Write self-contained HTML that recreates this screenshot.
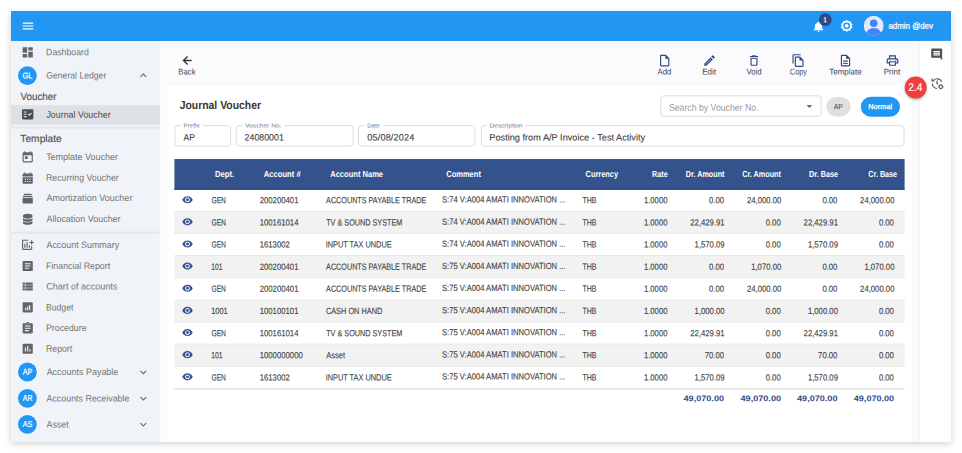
<!DOCTYPE html>
<html lang="en">
<head>
<meta charset="utf-8">
<title>Journal Voucher</title>
<style>
*{box-sizing:border-box;margin:0;padding:0}
html,body{width:962px;height:453px;overflow:hidden;background:#fff}
body{font-family:"Liberation Sans",sans-serif;color:#444;position:relative}
#shadow{position:absolute;left:11px;top:11px;width:940px;height:431px;background:#fbfbfe;box-shadow:0 1.5px 7px rgba(0,0,0,.2)}
#L{position:absolute;left:0;top:0;width:962px;height:453px;clip-path:inset(11px 11px 11px 11px)}
#L>div,#L>svg{position:absolute}
svg{display:block}
.t{white-space:pre;text-rendering:geometricPrecision}
.ic{fill:#646464}
.tbi{fill:#2f4a86}
.eye{fill:#34528c}
</style>
</head>
<body>
<div id="shadow"></div>
<div id="L">
  <svg id="bg" style="left:0;top:0" width="962" height="453" viewBox="0 0 962 453">
    <!-- top bar / sidebar / panels -->
    <rect x="11" y="11" width="940" height="30" fill="#2196f3"/>
    <rect x="11" y="41" width="148.850" height="402" fill="#f0f4f9"/>
    <rect x="11" y="105.200" width="148.800" height="19.400" fill="#dde1e5"/>
    <rect x="11" y="126.400" width="148.800" height="2.200" fill="#e4e8ed"/>
    <rect x="11" y="231.500" width="148.800" height="2.200" fill="#e4e8ed"/>
    <rect x="166.200" y="83.900" width="746.900" height="370" rx="4.500" fill="#eef0f5"/>
    <rect x="166.700" y="84.400" width="745.900" height="370" rx="4" fill="#fff"/>
    <rect x="918.900" y="40.900" width="1" height="402" fill="#eceef3"/>
    <rect x="919.700" y="40.900" width="31.300" height="402" fill="#fff"/>
    <!-- search + chips -->
    <rect x="660.800" y="95.800" width="160.400" height="20.500" rx="3" fill="#fff" stroke="#dcdcdc"/>
    <rect x="826.300" y="97" width="24.500" height="19.400" rx="9.700" fill="#e0e0e0"/>
    <rect x="860.800" y="96.700" width="39.200" height="20" rx="10" fill="#2196f3"/>
    <!-- fields -->
    <g fill="#fff" stroke="#dcdcdc">
      <rect x="174.900" y="125.600" width="55.800" height="20.500" rx="3"/>
      <rect x="236.200" y="125.600" width="117" height="20.500" rx="3"/>
      <rect x="358.500" y="125.600" width="116.400" height="20.500" rx="3"/>
      <rect x="481.300" y="125.600" width="422.800" height="20.500" rx="3"/>
    </g>
    <g fill="#fff">
      <rect x="180.700" y="124" width="21.800" height="3.500"/>
      <rect x="242" y="124" width="41.800" height="3.500"/>
      <rect x="364.300" y="124" width="18.600" height="3.500"/>
      <rect x="486.800" y="124" width="38.600" height="3.500"/>
    </g>
    <!-- table -->
    <rect x="174.400" y="159.050" width="730.200" height="30.750" fill="#34538c"/>
    <rect x="174.400" y="188.300" width="730.200" height="1.500" fill="#2c4985"/>
    <g fill="#f2f2f2">
      <rect x="174.400" y="211.400" width="730.200" height="22.120"/>
      <rect x="174.400" y="255.640" width="730.200" height="22.120"/>
      <rect x="174.400" y="299.880" width="730.200" height="22.120"/>
      <rect x="174.400" y="344.120" width="730.200" height="22.120"/>
    </g>
    <g fill="#e7e7e7"><rect x="174.400" y="210.95" width="730.200" height=".9"/><rect x="174.400" y="233.07" width="730.200" height=".9"/><rect x="174.400" y="255.19" width="730.200" height=".9"/><rect x="174.400" y="277.31" width="730.200" height=".9"/><rect x="174.400" y="299.43" width="730.200" height=".9"/><rect x="174.400" y="321.55" width="730.200" height=".9"/><rect x="174.400" y="343.67" width="730.200" height=".9"/><rect x="174.400" y="365.79" width="730.200" height=".9"/></g>
    <rect x="174.400" y="388.200" width="730.200" height="1.400" fill="#e2e2e2"/>
    <!-- icons -->
    <svg x="21" y="19" width="14" height="14" viewBox="0 0 24 24"><path fill="#fff" d="M3 18h18v-2H3v2zm0-5h18v-2H3v2zm0-7v2h18V6H3z"/></svg>
    <svg x="811.3" y="20.2" width="14.400" height="12.600" viewBox="0 0 24 24" preserveAspectRatio="none"><path fill="#fff" d="M12 22c1.100 0 2-.9 2-2h-4c0 1.100.89 2 2 2zm6-6v-5c0-3.070-1.640-5.640-4.500-6.320V4c0-.83-.67-1.500-1.500-1.500s-1.500.67-1.500 1.500v.68C7.630 5.360 6 7.920 6 11v5l-2 2v1h16v-1l-2-2z"/></svg>
    <svg x="839.7" y="18.8" width="14" height="14" viewBox="0 0 24 24"><path fill="#fff" fill-rule="evenodd" d="M12 1.500l2.600 2.500 3.600-.4.700 3.500 3.200 1.700-1.500 3.200 1.500 3.200-3.200 1.700-.7 3.500-3.600-.4-2.600 2.500-2.600-2.500-3.600.4-.7-3.500-3.200-1.700 1.500-3.200-1.500-3.200 3.200-1.700.7-3.500 3.600.4zM12 6.200a5.800 5.800 0 1 0 0 11.600 5.800 5.800 0 0 0 0-11.600zm0 2.600a3.200 3.200 0 1 1 0 6.400 3.200 3.200 0 0 1 0-6.400z"/></svg>
    <svg x="863.7" y="15.8" width="20" height="20" viewBox="0 0 20 20"><defs><clipPath id="av"><circle cx="10" cy="10" r="10"/></clipPath></defs><circle cx="10" cy="10" r="10" fill="#e4e8fc"/><g clip-path="url(#av)" fill="#4285f4"><circle cx="10" cy="7.400" r="3.800"/><ellipse cx="10" cy="18.500" rx="7.500" ry="6.300"/></g></svg>
    <svg class="ic" x="20.9" y="45.5" width="13.600" height="13.600" viewBox="0 0 24 24"><path d="M3 13h8V3H3v10zm0 8h8v-6H3v6zm10 0h8V11h-8v10zm0-18v6h8V3h-8z"/></svg>
    <svg class="ic" x="136.8" y="69" width="13" height="13" viewBox="0 0 24 24"><path d="M12 8l-6 6 1.410 1.410L12 10.830l4.590 4.580L18 14z"/></svg>
    <svg x="20.9" y="107.5" fill="#4c4c4c" width="13.600" height="13.600" viewBox="0 0 24 24"><path d="M20 3H4c-1.100 0-2 .9-2 2v14c0 1.100.9 2 2 2h16c1.100 0 2-.9 2-2V5c0-1.100-.9-2-2-2zM10 17H5v-2h5v2zm0-4H5v-2h5v2zm0-4H5V7h5v2zm4.820 6L12 12.160l1.410-1.410 1.410 1.420L17.990 9l1.420 1.420L14.820 15z"/></svg>
    <svg class="ic" x="20.9" y="150.6" width="13.600" height="13.600" viewBox="0 0 24 24"><path d="M19 3h-1V1h-2v2H8V1H6v2H5c-1.110 0-1.990.9-1.990 2L3 19c0 1.100.89 2 2 2h14c1.100 0 2-.9 2-2V5c0-1.100-.9-2-2-2zm0 16H5V8h14v11zM7 10h5v5H7z"/></svg>
    <svg class="ic" x="20.9" y="171.9" width="13.600" height="13.600" viewBox="0 0 24 24"><path fill-rule="evenodd" d="M6 1h2v2h8V1h2v2h1.500c.8 0 1.500.7 1.500 1.500V8H3V4.500C3 3.700 3.700 3 4.500 3H6V1zM3 9.500h18v10c0 .8-.7 1.500-1.500 1.500h-15c-.8 0-1.500-.7-1.500-1.500v-10zm4 2.500v2h2v-2H7zm4 0v2h2v-2h-2zm4 0v2h2v-2h-2zm-8 4v2h2v-2H7zm4 0v2h2v-2h-2zm4 0v2h2v-2h-2z"/></svg>
    <svg class="ic" x="20.9" y="191.7" width="13.600" height="13.600" viewBox="0 0 24 24"><path d="M6 3.500h12c.6 0 1 .4 1 1V6H5V4.500c0-.6.4-1 1-1zM4.500 7h15c.6 0 1 .4 1 1v1.500h-17V8c0-.6.4-1 1-1zM3 10.500h18V20c0 .6-.4 1-1 1H4c-.6 0-1-.4-1-1v-9.500z"/></svg>
    <svg class="ic" x="20.9" y="212.4" width="13.600" height="13.600" viewBox="0 0 24 24"><path d="M12 2.500c-4.700 0-8.500 1.500-8.500 3.300v1.900c0 1.800 3.800 3.300 8.500 3.300s8.500-1.500 8.500-3.300V5.800c0-1.800-3.800-3.300-8.500-3.300zM3.500 10.300v3c0 1.800 3.800 3.300 8.500 3.300s8.500-1.500 8.500-3.300v-3c-1.800 1.400-5.200 2.100-8.500 2.100s-6.700-.7-8.500-2.100zm0 5.400v3c0 1.800 3.800 3.300 8.500 3.300s8.500-1.500 8.500-3.300v-3c-1.800 1.400-5.200 2.100-8.500 2.100s-6.700-.7-8.500-2.100z"/></svg>
    <svg class="ic" x="20.9" y="238" width="13.600" height="13.600" viewBox="0 0 24 24"><path d="M6 10h2v7H6zm8 3h2v4h-2zm-4-6h2v10h-2zM20 7V4h-2v3h-3v2h3v3h2V9h3V7zm-2 12H4V5h9V3H4c-1.100 0-2 .9-2 2v14c0 1.100.9 2 2 2h14c1.100 0 2-.9 2-2v-5h-2v5z"/></svg>
    <svg class="ic" x="20.9" y="259.2" width="13.600" height="13.600" viewBox="0 0 24 24"><path d="M19 3H5c-1.100 0-2 .9-2 2v14c0 1.100.9 2 2 2h14c1.100 0 2-.9 2-2V5c0-1.100-.9-2-2-2zm-5 14H7v-2h7v2zm3-4H7v-2h10v2zm0-4H7V7h10v2z"/></svg>
    <svg class="ic" x="20.9" y="279.7" width="13.600" height="13.600" viewBox="0 0 24 24"><path d="M3 14h4v-4H3v4zm0 5h4v-4H3v4zM3 9h4V5H3v4zm5 5h13v-4H8v4zm0 5h13v-4H8v4zM8 5v4h13V5H8z"/></svg>
    <svg class="ic" x="20.9" y="300.5" width="13.600" height="13.600" viewBox="0 0 24 24"><path d="M19 3H5c-1.100 0-2 .9-2 2v14c0 1.100.9 2 2 2h14c1.100 0 2-.9 2-2V5c0-1.100-.9-2-2-2zM9.500 17h-2v-4h2v4zm3.500 0h-2v-6.500h2V17zm3.500 0h-2V8h2v9z"/></svg>
    <svg class="ic" x="20.9" y="321.5" width="13.600" height="13.600" viewBox="0 0 24 24"><path d="M19 3h-4.180C14.400 1.840 13.300 1 12 1c-1.300 0-2.400.84-2.820 2H5c-1.100 0-2 .9-2 2v14c0 1.100.9 2 2 2h14c1.100 0 2-.9 2-2V5c0-1.100-.9-2-2-2zm-7 0c.55 0 1 .45 1 1s-.45 1-1 1-1-.45-1-1 .45-1 1-1zm2 14H7v-2h7v2zm3-4H7v-2h10v2zm0-4H7V7h10v2z"/></svg>
    <svg class="ic" x="20.9" y="341.95" width="13.600" height="13.600" viewBox="0 0 24 24"><path d="M19 3H5c-1.100 0-2 .9-2 2v14c0 1.100.9 2 2 2h14c1.100 0 2-.9 2-2V5c0-1.100-.9-2-2-2zM9 17H7v-7h2v7zm4 0h-2V7h2v10zm4 0h-2v-4h2v4z"/></svg>
    <svg class="ic" x="136.8" y="365.8" width="13" height="13" viewBox="0 0 24 24"><path d="M16.590 8.590L12 13.170 7.410 8.590 6 10l6 6 6-6z"/></svg>
    <svg class="ic" x="136.8" y="392" width="13" height="13" viewBox="0 0 24 24"><path d="M16.590 8.590L12 13.170 7.410 8.590 6 10l6 6 6-6z"/></svg>
    <svg class="ic" x="136.8" y="418" width="13" height="13" viewBox="0 0 24 24"><path d="M16.590 8.590L12 13.170 7.410 8.590 6 10l6 6 6-6z"/></svg>
    <svg x="180.6" y="54" fill="#2e2e2e" stroke="#2e2e2e" stroke-width=".7" width="13" height="13" viewBox="0 0 24 24"><path d="M20 11H7.830l5.590-5.590L12 4l-8 8 8 8 1.410-1.410L7.830 13H20v-2z"/></svg>
    <svg class="tbi" x="657.7" y="53.6" width="14" height="14" viewBox="0 0 24 24"><path d="M14 2H6c-1.100 0-1.990.9-1.990 2L4 20c0 1.100.89 2 1.990 2H18c1.100 0 2-.9 2-2V8l-6-6zM6 20V4h7v5h5v11H6z"/></svg>
    <svg class="tbi" x="702.5" y="53.6" width="14" height="14" viewBox="0 0 24 24"><path d="M3 21v-3.750L14.060 6.190l3.750 3.750L6.750 21H3zm2.300-2.300h.55l8.900-8.900-.55-.55-8.900 8.900v.55zM15.120 5.120l1.830-1.830c.39-.39 1.020-.39 1.410 0l2.340 2.340c.39.39.39 1.020 0 1.410l-1.830 1.830-3.750-3.750z" fill-rule="evenodd"/></svg>
    <svg class="tbi" x="747" y="53.6" width="14" height="14" viewBox="0 0 24 24"><path d="M16 9v10H8V9h8m-1.500-6h-5l-1 1H5v2h14V4h-3.500l-1-1zM18 7H6v12c0 1.100.9 2 2 2h8c1.100 0 2-.9 2-2V7z"/></svg>
    <svg class="tbi" x="791.3" y="53.6" width="14" height="14" viewBox="0 0 24 24"><path d="M16 1H4c-1.100 0-2 .9-2 2v14h2V3h12V1zm-1 4H8c-1.100 0-1.990.9-1.990 2L6 21c0 1.100.89 2 1.990 2H19c1.100 0 2-.9 2-2V11l-6-6zM8 21V7h6v5h5v9H8z"/></svg>
    <svg class="tbi" x="838.5" y="53.6" width="14" height="14" viewBox="0 0 24 24"><path d="M8 16h8v2H8zm0-4h8v2H8zm6-10H6c-1.100 0-2 .9-2 2v16c0 1.100.89 2 1.990 2H18c1.100 0 2-.9 2-2V8l-6-6zm4 18H6V4h7v5h5v11z"/></svg>
    <svg class="tbi" x="885.5" y="53.6" width="14" height="14" viewBox="0 0 24 24"><path d="M19 8h-1V3H6v5H5c-1.660 0-3 1.340-3 3v6h4v4h12v-4h4v-6c0-1.660-1.340-3-3-3zM8 5h8v3H8V5zm8 14H8v-4h8v4zm2-4v-2H6v2H4v-4c0-.55.45-1 1-1h14c.55 0 1 .45 1 1v4h-2z"/><circle cx="18" cy="11.500" r="1"/></svg>
    <svg x="930.1" y="47.4" fill="#505058" width="13.200" height="13.900" viewBox="0 0 24 24" preserveAspectRatio="none"><path d="M21.990 4c0-1.100-.89-2-1.990-2H4c-1.100 0-2 .9-2 2v12c0 1.100.9 2 2 2h14l4 4-.01-18zM18 14H6v-2h12v2zm0-3H6V9h12v2zm0-3H6V6h12v2z"/></svg>
    <svg x="930.3" y="76.5" width="14" height="14" viewBox="0 0 24 24" fill="none" stroke="#555" stroke-width="2"><path d="M5.500 6.500A8.500 8.500 0 0 1 19.500 9M3.500 12a8.500 8.500 0 0 0 8 8.500"/><path d="M3 3.500v4h4" stroke-linejoin="round"/><path d="M11.500 7v5l2 1.500"/><circle cx="18" cy="17.500" r="3"/><path d="M18 13v1.500M18 20.500V22M13.500 17.500H15M21 17.500h1.500" stroke-width="1.800"/></svg>
    <svg x="806.5" y="105" width="5.800" height="3" viewBox="0 0 10 5"><path fill="#6a6a6a" d="M0 0h10L5 5z"/></svg>
    <svg class="eye" x="181.8" y="194" width="11.400" height="11.400" viewBox="0 0 24 24"><path d="M12 4.500C7 4.500 2.730 7.610 1 12c1.730 4.390 6 7.500 11 7.500s9.270-3.110 11-7.500c-1.730-4.390-6-7.500-11-7.500zM12 17c-2.760 0-5-2.240-5-5s2.240-5 5-5 5 2.240 5 5-2.240 5-5 5zm0-8c-1.660 0-3 1.340-3 3s1.340 3 3 3 3-1.340 3-3-1.340-3-3-3z"/></svg>
    <svg class="eye" x="181.8" y="216.14" width="11.400" height="11.400" viewBox="0 0 24 24"><path d="M12 4.500C7 4.500 2.730 7.610 1 12c1.730 4.390 6 7.500 11 7.500s9.270-3.110 11-7.500c-1.730-4.390-6-7.500-11-7.500zM12 17c-2.760 0-5-2.240-5-5s2.240-5 5-5 5 2.240 5 5-2.240 5-5 5zm0-8c-1.660 0-3 1.340-3 3s1.340 3 3 3 3-1.340 3-3-1.340-3-3-3z"/></svg>
    <svg class="eye" x="181.8" y="238.28" width="11.400" height="11.400" viewBox="0 0 24 24"><path d="M12 4.500C7 4.500 2.730 7.610 1 12c1.730 4.390 6 7.500 11 7.500s9.270-3.110 11-7.500c-1.730-4.390-6-7.500-11-7.500zM12 17c-2.760 0-5-2.240-5-5s2.240-5 5-5 5 2.240 5 5-2.240 5-5 5zm0-8c-1.660 0-3 1.340-3 3s1.340 3 3 3 3-1.340 3-3-1.340-3-3-3z"/></svg>
    <svg class="eye" x="181.8" y="260.42" width="11.400" height="11.400" viewBox="0 0 24 24"><path d="M12 4.500C7 4.500 2.730 7.610 1 12c1.730 4.390 6 7.500 11 7.500s9.270-3.110 11-7.500c-1.730-4.390-6-7.500-11-7.500zM12 17c-2.760 0-5-2.240-5-5s2.240-5 5-5 5 2.240 5 5-2.240 5-5 5zm0-8c-1.660 0-3 1.340-3 3s1.340 3 3 3 3-1.340 3-3-1.340-3-3-3z"/></svg>
    <svg class="eye" x="181.8" y="282.56" width="11.400" height="11.400" viewBox="0 0 24 24"><path d="M12 4.500C7 4.500 2.730 7.610 1 12c1.730 4.390 6 7.500 11 7.500s9.270-3.110 11-7.500c-1.730-4.390-6-7.500-11-7.500zM12 17c-2.760 0-5-2.240-5-5s2.240-5 5-5 5 2.240 5 5-2.240 5-5 5zm0-8c-1.660 0-3 1.340-3 3s1.340 3 3 3 3-1.340 3-3-1.340-3-3-3z"/></svg>
    <svg class="eye" x="181.8" y="304.7" width="11.400" height="11.400" viewBox="0 0 24 24"><path d="M12 4.500C7 4.500 2.730 7.610 1 12c1.730 4.390 6 7.500 11 7.500s9.270-3.110 11-7.500c-1.730-4.390-6-7.500-11-7.500zM12 17c-2.760 0-5-2.240-5-5s2.240-5 5-5 5 2.240 5 5-2.240 5-5 5zm0-8c-1.660 0-3 1.340-3 3s1.340 3 3 3 3-1.340 3-3-1.340-3-3-3z"/></svg>
    <svg class="eye" x="181.8" y="326.84" width="11.400" height="11.400" viewBox="0 0 24 24"><path d="M12 4.500C7 4.500 2.730 7.610 1 12c1.730 4.390 6 7.500 11 7.500s9.270-3.110 11-7.500c-1.730-4.390-6-7.500-11-7.500zM12 17c-2.760 0-5-2.240-5-5s2.240-5 5-5 5 2.240 5 5-2.240 5-5 5zm0-8c-1.660 0-3 1.340-3 3s1.340 3 3 3 3-1.340 3-3-1.340-3-3-3z"/></svg>
    <svg class="eye" x="181.8" y="348.98" width="11.400" height="11.400" viewBox="0 0 24 24"><path d="M12 4.500C7 4.500 2.730 7.610 1 12c1.730 4.390 6 7.500 11 7.500s9.270-3.110 11-7.500c-1.730-4.390-6-7.500-11-7.500zM12 17c-2.760 0-5-2.240-5-5s2.240-5 5-5 5 2.240 5 5-2.240 5-5 5zm0-8c-1.660 0-3 1.340-3 3s1.340 3 3 3 3-1.340 3-3-1.340-3-3-3z"/></svg>
    <svg class="eye" x="181.8" y="371.12" width="11.400" height="11.400" viewBox="0 0 24 24"><path d="M12 4.500C7 4.500 2.730 7.610 1 12c1.730 4.390 6 7.500 11 7.500s9.270-3.110 11-7.500c-1.730-4.390-6-7.500-11-7.500zM12 17c-2.760 0-5-2.240-5-5s2.240-5 5-5 5 2.240 5 5-2.240 5-5 5zm0-8c-1.660 0-3 1.340-3 3s1.340 3 3 3 3-1.340 3-3-1.340-3-3-3z"/></svg>
    <circle cx="825.300" cy="19.700" r="6.400" fill="#2f4a86"/>
    <defs><filter id="bs" x="-50%" y="-50%" width="200%" height="200%"><feGaussianBlur stdDeviation="1.400"/></filter></defs>
    <circle cx="915.700" cy="88.700" r="10.600" fill="#000" opacity=".42" filter="url(#bs)"/>
    <circle cx="915.700" cy="87.500" r="10.950" fill="#f23d3d"/>
    <circle cx="27.4" cy="75.6" r="9.400" fill="#2196f3"/>
    <circle cx="27.4" cy="372" r="9.400" fill="#2196f3"/>
    <circle cx="27.4" cy="398.3" r="9.400" fill="#2196f3"/>
    <circle cx="27.4" cy="424.3" r="9.400" fill="#2196f3"/>
  </svg>
<div class="t" style="top:19px;font-size:8.8px;line-height:12px;color:#fff;-webkit-text-stroke:0.25px #fff;left:888px;transform:matrix(0.8986,.0005,0,1,0.45,0.75);transform-origin:0 0;">admin @dev</div>
<div class="t" style="top:14px;font-size:7.2px;line-height:11px;color:#fff;font-weight:bold;left:823px;transform:matrix(0.7631,.0005,0,1,0.62,0.25);transform-origin:0 0;">1</div>
<div class="t" style="top:69px;font-size:8.6px;line-height:12px;color:#fff;-webkit-text-stroke:0.2px #fff;left:22px;transform:matrix(0.8752,.0005,0,1,0.39,0.5);transform-origin:0 0;">GL</div>
<div class="t" style="top:365px;font-size:8.6px;line-height:12px;color:#fff;-webkit-text-stroke:0.2px #fff;left:22px;transform:matrix(0.8428,.0005,0,1,0.65,0.75);transform-origin:0 0;">AP</div>
<div class="t" style="top:392px;font-size:8.6px;line-height:12px;color:#fff;-webkit-text-stroke:0.2px #fff;left:22px;transform:matrix(0.8063,.0005,0,1,0.76,0);transform-origin:0 0;">AR</div>
<div class="t" style="top:418px;font-size:8.6px;line-height:12px;color:#fff;-webkit-text-stroke:0.2px #fff;left:22px;transform:matrix(0.8339,.0005,0,1,0.74,0);transform-origin:0 0;">AS</div>
<div class="t" style="top:46px;font-size:9.3px;line-height:12px;color:#737373;left:46px;transform:matrix(0.9408,.0005,0,1,0.07,0.25);transform-origin:0 0;">Dashboard</div>
<div class="t" style="top:69px;font-size:9.3px;line-height:12px;color:#737373;left:46px;transform:matrix(0.9290,.0005,0,1,0.28,0.5);transform-origin:0 0;">General Ledger</div>
<div class="t" style="top:91px;font-size:10.3px;line-height:13px;color:#555;-webkit-text-stroke:0.18px #555;left:20px;transform:matrix(0.9554,.0005,0,1,0.46,0);transform-origin:0 0;">Voucher</div>
<div class="t" style="top:108px;font-size:9.3px;line-height:12px;color:#4a4a4a;left:46px;transform:matrix(0.9555,.0005,0,1,0.39,0.75);transform-origin:0 0;">Journal Voucher</div>
<div class="t" style="top:133px;font-size:10.3px;line-height:13px;color:#555;-webkit-text-stroke:0.18px #555;left:20px;transform:matrix(0.9925,.0005,0,1,0.33,0);transform-origin:0 0;">Template</div>
<div class="t" style="top:151px;font-size:9.3px;line-height:12px;color:#737373;left:46px;transform:matrix(0.9667,.0005,0,1,0.13,0);transform-origin:0 0;">Template Voucher</div>
<div class="t" style="top:171px;font-size:9.3px;line-height:12px;color:#737373;left:45px;transform:matrix(0.9450,.0005,0,1,0.95,0.75);transform-origin:0 0;">Recurring Voucher</div>
<div class="t" style="top:192px;font-size:9.3px;line-height:12px;color:#737373;left:46px;transform:matrix(0.9726,.0005,0,1,0.45,0);transform-origin:0 0;">Amortization Voucher</div>
<div class="t" style="top:213px;font-size:9.3px;line-height:12px;color:#737373;left:46px;transform:matrix(0.9619,.0005,0,1,0.48,0);transform-origin:0 0;">Allocation Voucher</div>
<div class="t" style="top:239px;font-size:9.3px;line-height:12px;color:#737373;left:46px;transform:matrix(0.9570,.0005,0,1,0.46,0);transform-origin:0 0;">Account Summary</div>
<div class="t" style="top:260px;font-size:9.3px;line-height:12px;color:#737373;left:46px;transform:matrix(0.9466,.0005,0,1,0.03,0);transform-origin:0 0;">Financial Report</div>
<div class="t" style="top:280px;font-size:9.3px;line-height:12px;color:#737373;left:46px;transform:matrix(0.9773,.0005,0,1,0.19,0.5);transform-origin:0 0;">Chart of accounts</div>
<div class="t" style="top:301px;font-size:9.3px;line-height:12px;color:#737373;left:45px;transform:matrix(0.9357,.0005,0,1,0.89,0.5);transform-origin:0 0;">Budget</div>
<div class="t" style="top:322px;font-size:9.3px;line-height:12px;color:#737373;left:46px;transform:matrix(0.9457,.0005,0,1,0.00,0);transform-origin:0 0;">Procedure</div>
<div class="t" style="top:342px;font-size:9.3px;line-height:12px;color:#737373;left:46px;transform:matrix(0.9372,.0005,0,1,0.02,0.75);transform-origin:0 0;">Report</div>
<div class="t" style="top:366px;font-size:9.3px;line-height:12px;color:#737373;left:46px;transform:matrix(0.9631,.0005,0,1,0.63,0);transform-origin:0 0;">Accounts Payable</div>
<div class="t" style="top:392px;font-size:9.3px;line-height:12px;color:#737373;left:46px;transform:matrix(0.9559,.0005,0,1,0.46,0.5);transform-origin:0 0;">Accounts Receivable</div>
<div class="t" style="top:418px;font-size:9.3px;line-height:12px;color:#737373;left:46px;transform:matrix(0.9520,.0005,0,1,0.49,0.5);transform-origin:0 0;">Asset</div>
<div class="t" style="top:65px;font-size:8.3px;line-height:12px;color:#3d4257;left:178px;transform:matrix(0.9332,.0005,0,1,0.29,0.5);transform-origin:0 0;">Back</div>
<div class="t" style="top:65px;font-size:8.3px;line-height:12px;color:#3d4257;left:657px;transform:matrix(0.9376,.0005,0,1,0.54,0.5);transform-origin:0 0;">Add</div>
<div class="t" style="top:65px;font-size:8.3px;line-height:12px;color:#3d4257;left:702px;transform:matrix(0.9608,.0005,0,1,0.29,0.5);transform-origin:0 0;">Edit</div>
<div class="t" style="top:65px;font-size:8.3px;line-height:12px;color:#3d4257;left:746px;transform:matrix(0.9381,.0005,0,1,0.52,0.5);transform-origin:0 0;">Void</div>
<div class="t" style="top:65px;font-size:8.3px;line-height:12px;color:#3d4257;left:789px;transform:matrix(0.8886,.0005,0,1,0.83,0.5);transform-origin:0 0;">Copy</div>
<div class="t" style="top:65px;font-size:8.3px;line-height:12px;color:#3d4257;left:829px;transform:matrix(0.9635,.0005,0,1,0.19,0.5);transform-origin:0 0;">Template</div>
<div class="t" style="top:65px;font-size:8.3px;line-height:12px;color:#3d4257;left:883px;transform:matrix(0.9725,.0005,0,1,0.72,0.5);transform-origin:0 0;">Print</div>
<div class="t" style="top:99px;font-size:11.6px;line-height:14px;color:#363636;font-weight:bold;left:179px;transform:matrix(0.8967,.0005,0,1,0.70,0);transform-origin:0 0;">Journal Voucher</div>
<div class="t" style="top:101px;font-size:9.7px;line-height:13px;color:#9a9a9a;left:668px;transform:matrix(0.8998,.0005,0,1,0.91,0.75);transform-origin:0 0;">Search by Voucher No.</div>
<div class="t" style="top:101px;font-size:7.6px;line-height:11px;color:#3a3a3a;left:833px;transform:matrix(0.9074,.0005,0,1,0.73,0.25);transform-origin:0 0;">AP</div>
<div class="t" style="top:101px;font-size:7.2px;line-height:11px;color:#fff;letter-spacing:0.141px;-webkit-text-stroke:0.3px #fff;left:868px;transform:matrix(1.0000,.0005,0,1,0.27,0);transform-origin:0 0;">Normal</div>
<div class="t" style="top:81px;font-size:11.2px;line-height:14px;color:#fff;-webkit-text-stroke:0.2px #fff;left:908px;transform:matrix(0.9046,.0005,0,1,0.30,0);transform-origin:0 0;">2.4</div>
<div class="t" style="top:122px;font-size:6.0px;line-height:8px;color:#6d7a94;left:183px;transform:matrix(1.0661,.0005,0,1,0.46,0.5);transform-origin:0 0;">Prefix</div>
<div class="t" style="top:122px;font-size:6.0px;line-height:8px;color:#6d7a94;left:244px;transform:matrix(1.1096,.0005,0,1,0.90,0.5);transform-origin:0 0;">Voucher No.</div>
<div class="t" style="top:122px;font-size:6.0px;line-height:8px;color:#6d7a94;left:367px;transform:matrix(1.0145,.0005,0,1,0.13,0.5);transform-origin:0 0;">Date</div>
<div class="t" style="top:122px;font-size:6.0px;line-height:8px;color:#6d7a94;left:489px;transform:matrix(1.1046,.0005,0,1,0.41,0.5);transform-origin:0 0;">Description</div>
<div class="t" style="top:131px;font-size:9.2px;line-height:12px;color:#3a3a3a;-webkit-text-stroke:0.1px #3a3a3a;left:183px;transform:matrix(0.9264,.0005,0,1,0.51,0.5);transform-origin:0 0;">AP</div>
<div class="t" style="top:131px;font-size:9.2px;line-height:12px;color:#3a3a3a;-webkit-text-stroke:0.1px #3a3a3a;left:244px;transform:matrix(0.9592,.0005,0,1,0.60,0.5);transform-origin:0 0;">24080001</div>
<div class="t" style="top:131px;font-size:9.2px;line-height:12px;color:#3a3a3a;letter-spacing:0.129px;-webkit-text-stroke:0.1px #3a3a3a;left:367px;transform:matrix(1.0000,.0005,0,1,0.23,0.5);transform-origin:0 0;">05/08/2024</div>
<div class="t" style="top:131px;font-size:9.2px;line-height:12px;color:#3a3a3a;-webkit-text-stroke:0.1px #3a3a3a;left:489px;transform:matrix(0.9993,.0005,0,1,0.34,0.5);transform-origin:0 0;">Posting from A/P Invoice - Test Activity</div>
<div class="t" style="top:168px;font-size:8.8px;line-height:12px;color:#fff;font-weight:bold;left:214px;transform:matrix(0.8746,.0005,0,1,0.91,0);transform-origin:0 0;">Dept.</div>
<div class="t" style="top:168px;font-size:8.8px;line-height:12px;color:#fff;font-weight:bold;left:263px;transform:matrix(0.8731,.0005,0,1,0.63,0);transform-origin:0 0;">Account #</div>
<div class="t" style="top:168px;font-size:8.8px;line-height:12px;color:#fff;font-weight:bold;left:330px;transform:matrix(0.8576,.0005,0,1,0.22,0);transform-origin:0 0;">Account Name</div>
<div class="t" style="top:168px;font-size:8.8px;line-height:12px;color:#fff;font-weight:bold;left:446px;transform:matrix(0.8553,.0005,0,1,0.21,0);transform-origin:0 0;">Comment</div>
<div class="t" style="top:168px;font-size:8.8px;line-height:12px;color:#fff;font-weight:bold;left:585px;transform:matrix(0.8417,.0005,0,1,0.55,0);transform-origin:0 0;">Currency</div>
<div class="t" style="top:168px;font-size:8.8px;line-height:12px;color:#fff;font-weight:bold;left:652px;transform:matrix(0.8122,.0005,0,1,0.12,0);transform-origin:0 0;">Rate</div>
<div class="t" style="top:168px;font-size:8.8px;line-height:12px;color:#fff;font-weight:bold;left:685px;transform:matrix(0.8204,.0005,0,1,0.85,0);transform-origin:0 0;">Dr. Amount</div>
<div class="t" style="top:168px;font-size:8.8px;line-height:12px;color:#fff;font-weight:bold;left:742px;transform:matrix(0.8234,.0005,0,1,0.15,0);transform-origin:0 0;">Cr. Amount</div>
<div class="t" style="top:168px;font-size:8.8px;line-height:12px;color:#fff;font-weight:bold;left:809px;transform:matrix(0.8226,.0005,0,1,0.11,0);transform-origin:0 0;">Dr. Base</div>
<div class="t" style="top:168px;font-size:8.8px;line-height:12px;color:#fff;font-weight:bold;left:868px;transform:matrix(0.8156,.0005,0,1,0.35,0);transform-origin:0 0;">Cr. Base</div>
<div class="t" style="top:194px;font-size:9.0px;line-height:12px;color:#3e3e3e;-webkit-text-stroke:0.12px #3e3e3e;left:211px;transform:matrix(0.7450,.0005,0,1,0.42,0.25);transform-origin:0 0;">GEN</div>
<div class="t" style="top:194px;font-size:9.0px;line-height:12px;color:#3e3e3e;-webkit-text-stroke:0.12px #3e3e3e;left:259px;transform:matrix(0.8617,.0005,0,1,0.64,0.25);transform-origin:0 0;">200200401</div>
<div class="t" style="top:194px;font-size:9.0px;line-height:12px;color:#3e3e3e;-webkit-text-stroke:0.12px #3e3e3e;left:326px;transform:matrix(0.8019,.0005,0,1,0.09,0.25);transform-origin:0 0;">ACCOUNTS PAYABLE TRADE</div>
<div class="t" style="top:193px;font-size:9.0px;line-height:12px;color:#3e3e3e;-webkit-text-stroke:0.12px #3e3e3e;left:442px;transform:matrix(0.8442,.0005,0,1,0.05,0.5);transform-origin:0 0;">S:74 V:A004 AMATI INNOVATION ...</div>
<div class="t" style="top:194px;font-size:9.0px;line-height:12px;color:#3e3e3e;-webkit-text-stroke:0.12px #3e3e3e;left:582px;transform:matrix(0.7871,.0005,0,1,0.38,0.25);transform-origin:0 0;">THB</div>
<div class="t" style="top:194px;font-size:9.0px;line-height:12px;color:#3e3e3e;-webkit-text-stroke:0.12px #3e3e3e;right:295px;transform:matrix(0.8547,.0005,0,1,0.92,0.25);transform-origin:100% 0;">1.0000</div>
<div class="t" style="top:194px;font-size:9.0px;line-height:12px;color:#3e3e3e;-webkit-text-stroke:0.12px #3e3e3e;right:238px;transform:matrix(0.8570,.0005,0,1,0.58,0.25);transform-origin:100% 0;">0.00</div>
<div class="t" style="top:194px;font-size:9.0px;line-height:12px;color:#3e3e3e;-webkit-text-stroke:0.12px #3e3e3e;right:181px;transform:matrix(0.8570,.0005,0,1,0.18,0.25);transform-origin:100% 0;">24,000.00</div>
<div class="t" style="top:194px;font-size:9.0px;line-height:12px;color:#3e3e3e;-webkit-text-stroke:0.12px #3e3e3e;right:125px;transform:matrix(0.8570,.0005,0,1,0.88,0.25);transform-origin:100% 0;">0.00</div>
<div class="t" style="top:194px;font-size:9.0px;line-height:12px;color:#3e3e3e;-webkit-text-stroke:0.12px #3e3e3e;right:68px;transform:matrix(0.8570,.0005,0,1,0.38,0.25);transform-origin:100% 0;">24,000.00</div>
<div class="t" style="top:216px;font-size:9.0px;line-height:12px;color:#3e3e3e;-webkit-text-stroke:0.12px #3e3e3e;left:211px;transform:matrix(0.7450,.0005,0,1,0.42,0.5);transform-origin:0 0;">GEN</div>
<div class="t" style="top:216px;font-size:9.0px;line-height:12px;color:#3e3e3e;-webkit-text-stroke:0.12px #3e3e3e;left:259px;transform:matrix(0.8617,.0005,0,1,0.64,0.5);transform-origin:0 0;">100161014</div>
<div class="t" style="top:216px;font-size:9.0px;line-height:12px;color:#3e3e3e;-webkit-text-stroke:0.12px #3e3e3e;left:326px;transform:matrix(0.8068,.0005,0,1,0.13,0.5);transform-origin:0 0;">TV &amp; SOUND SYSTEM</div>
<div class="t" style="top:215px;font-size:9.0px;line-height:12px;color:#3e3e3e;-webkit-text-stroke:0.12px #3e3e3e;left:442px;transform:matrix(0.8442,.0005,0,1,0.05,0.75);transform-origin:0 0;">S:74 V:A004 AMATI INNOVATION ...</div>
<div class="t" style="top:216px;font-size:9.0px;line-height:12px;color:#3e3e3e;-webkit-text-stroke:0.12px #3e3e3e;left:582px;transform:matrix(0.7871,.0005,0,1,0.38,0.5);transform-origin:0 0;">THB</div>
<div class="t" style="top:216px;font-size:9.0px;line-height:12px;color:#3e3e3e;-webkit-text-stroke:0.12px #3e3e3e;right:295px;transform:matrix(0.8547,.0005,0,1,0.92,0.5);transform-origin:100% 0;">1.0000</div>
<div class="t" style="top:216px;font-size:9.0px;line-height:12px;color:#3e3e3e;-webkit-text-stroke:0.12px #3e3e3e;right:238px;transform:matrix(0.8570,.0005,0,1,0.58,0.5);transform-origin:100% 0;">22,429.91</div>
<div class="t" style="top:216px;font-size:9.0px;line-height:12px;color:#3e3e3e;-webkit-text-stroke:0.12px #3e3e3e;right:181px;transform:matrix(0.8570,.0005,0,1,0.18,0.5);transform-origin:100% 0;">0.00</div>
<div class="t" style="top:216px;font-size:9.0px;line-height:12px;color:#3e3e3e;-webkit-text-stroke:0.12px #3e3e3e;right:125px;transform:matrix(0.8570,.0005,0,1,0.88,0.5);transform-origin:100% 0;">22,429.91</div>
<div class="t" style="top:216px;font-size:9.0px;line-height:12px;color:#3e3e3e;-webkit-text-stroke:0.12px #3e3e3e;right:68px;transform:matrix(0.8570,.0005,0,1,0.38,0.5);transform-origin:100% 0;">0.00</div>
<div class="t" style="top:238px;font-size:9.0px;line-height:12px;color:#3e3e3e;-webkit-text-stroke:0.12px #3e3e3e;left:211px;transform:matrix(0.7450,.0005,0,1,0.42,0.5);transform-origin:0 0;">GEN</div>
<div class="t" style="top:238px;font-size:9.0px;line-height:12px;color:#3e3e3e;-webkit-text-stroke:0.12px #3e3e3e;left:259px;transform:matrix(0.8617,.0005,0,1,0.64,0.5);transform-origin:0 0;">1613002</div>
<div class="t" style="top:238px;font-size:9.0px;line-height:12px;color:#3e3e3e;-webkit-text-stroke:0.12px #3e3e3e;left:325px;transform:matrix(0.8191,.0005,0,1,0.67,0.5);transform-origin:0 0;">INPUT TAX UNDUE</div>
<div class="t" style="top:237px;font-size:9.0px;line-height:12px;color:#3e3e3e;-webkit-text-stroke:0.12px #3e3e3e;left:442px;transform:matrix(0.8442,.0005,0,1,0.05,0.75);transform-origin:0 0;">S:74 V:A004 AMATI INNOVATION ...</div>
<div class="t" style="top:238px;font-size:9.0px;line-height:12px;color:#3e3e3e;-webkit-text-stroke:0.12px #3e3e3e;left:582px;transform:matrix(0.7871,.0005,0,1,0.38,0.5);transform-origin:0 0;">THB</div>
<div class="t" style="top:238px;font-size:9.0px;line-height:12px;color:#3e3e3e;-webkit-text-stroke:0.12px #3e3e3e;right:295px;transform:matrix(0.8547,.0005,0,1,0.92,0.5);transform-origin:100% 0;">1.0000</div>
<div class="t" style="top:238px;font-size:9.0px;line-height:12px;color:#3e3e3e;-webkit-text-stroke:0.12px #3e3e3e;right:238px;transform:matrix(0.8570,.0005,0,1,0.58,0.5);transform-origin:100% 0;">1,570.09</div>
<div class="t" style="top:238px;font-size:9.0px;line-height:12px;color:#3e3e3e;-webkit-text-stroke:0.12px #3e3e3e;right:181px;transform:matrix(0.8570,.0005,0,1,0.18,0.5);transform-origin:100% 0;">0.00</div>
<div class="t" style="top:238px;font-size:9.0px;line-height:12px;color:#3e3e3e;-webkit-text-stroke:0.12px #3e3e3e;right:125px;transform:matrix(0.8570,.0005,0,1,0.88,0.5);transform-origin:100% 0;">1,570.09</div>
<div class="t" style="top:238px;font-size:9.0px;line-height:12px;color:#3e3e3e;-webkit-text-stroke:0.12px #3e3e3e;right:68px;transform:matrix(0.8570,.0005,0,1,0.38,0.5);transform-origin:100% 0;">0.00</div>
<div class="t" style="top:260px;font-size:9.0px;line-height:12px;color:#3e3e3e;-webkit-text-stroke:0.12px #3e3e3e;left:211px;transform:matrix(0.7561,.0005,0,1,0.19,0.75);transform-origin:0 0;">101</div>
<div class="t" style="top:260px;font-size:9.0px;line-height:12px;color:#3e3e3e;-webkit-text-stroke:0.12px #3e3e3e;left:259px;transform:matrix(0.8617,.0005,0,1,0.64,0.75);transform-origin:0 0;">200200401</div>
<div class="t" style="top:260px;font-size:9.0px;line-height:12px;color:#3e3e3e;-webkit-text-stroke:0.12px #3e3e3e;left:326px;transform:matrix(0.8019,.0005,0,1,0.09,0.75);transform-origin:0 0;">ACCOUNTS PAYABLE TRADE</div>
<div class="t" style="top:260px;font-size:9.0px;line-height:12px;color:#3e3e3e;-webkit-text-stroke:0.12px #3e3e3e;left:442px;transform:matrix(0.8442,.0005,0,1,0.05,0);transform-origin:0 0;">S:75 V:A004 AMATI INNOVATION ...</div>
<div class="t" style="top:260px;font-size:9.0px;line-height:12px;color:#3e3e3e;-webkit-text-stroke:0.12px #3e3e3e;left:582px;transform:matrix(0.7871,.0005,0,1,0.38,0.75);transform-origin:0 0;">THB</div>
<div class="t" style="top:260px;font-size:9.0px;line-height:12px;color:#3e3e3e;-webkit-text-stroke:0.12px #3e3e3e;right:295px;transform:matrix(0.8547,.0005,0,1,0.92,0.75);transform-origin:100% 0;">1.0000</div>
<div class="t" style="top:260px;font-size:9.0px;line-height:12px;color:#3e3e3e;-webkit-text-stroke:0.12px #3e3e3e;right:238px;transform:matrix(0.8570,.0005,0,1,0.58,0.75);transform-origin:100% 0;">0.00</div>
<div class="t" style="top:260px;font-size:9.0px;line-height:12px;color:#3e3e3e;-webkit-text-stroke:0.12px #3e3e3e;right:181px;transform:matrix(0.8570,.0005,0,1,0.18,0.75);transform-origin:100% 0;">1,070.00</div>
<div class="t" style="top:260px;font-size:9.0px;line-height:12px;color:#3e3e3e;-webkit-text-stroke:0.12px #3e3e3e;right:125px;transform:matrix(0.8570,.0005,0,1,0.88,0.75);transform-origin:100% 0;">0.00</div>
<div class="t" style="top:260px;font-size:9.0px;line-height:12px;color:#3e3e3e;-webkit-text-stroke:0.12px #3e3e3e;right:68px;transform:matrix(0.8570,.0005,0,1,0.38,0.75);transform-origin:100% 0;">1,070.00</div>
<div class="t" style="top:282px;font-size:9.0px;line-height:12px;color:#3e3e3e;-webkit-text-stroke:0.12px #3e3e3e;left:211px;transform:matrix(0.7450,.0005,0,1,0.42,0.75);transform-origin:0 0;">GEN</div>
<div class="t" style="top:282px;font-size:9.0px;line-height:12px;color:#3e3e3e;-webkit-text-stroke:0.12px #3e3e3e;left:259px;transform:matrix(0.8617,.0005,0,1,0.64,0.75);transform-origin:0 0;">200200401</div>
<div class="t" style="top:282px;font-size:9.0px;line-height:12px;color:#3e3e3e;-webkit-text-stroke:0.12px #3e3e3e;left:326px;transform:matrix(0.8019,.0005,0,1,0.09,0.75);transform-origin:0 0;">ACCOUNTS PAYABLE TRADE</div>
<div class="t" style="top:282px;font-size:9.0px;line-height:12px;color:#3e3e3e;-webkit-text-stroke:0.12px #3e3e3e;left:442px;transform:matrix(0.8442,.0005,0,1,0.05,0);transform-origin:0 0;">S:75 V:A004 AMATI INNOVATION ...</div>
<div class="t" style="top:282px;font-size:9.0px;line-height:12px;color:#3e3e3e;-webkit-text-stroke:0.12px #3e3e3e;left:582px;transform:matrix(0.7871,.0005,0,1,0.38,0.75);transform-origin:0 0;">THB</div>
<div class="t" style="top:282px;font-size:9.0px;line-height:12px;color:#3e3e3e;-webkit-text-stroke:0.12px #3e3e3e;right:295px;transform:matrix(0.8547,.0005,0,1,0.92,0.75);transform-origin:100% 0;">1.0000</div>
<div class="t" style="top:282px;font-size:9.0px;line-height:12px;color:#3e3e3e;-webkit-text-stroke:0.12px #3e3e3e;right:238px;transform:matrix(0.8570,.0005,0,1,0.58,0.75);transform-origin:100% 0;">0.00</div>
<div class="t" style="top:282px;font-size:9.0px;line-height:12px;color:#3e3e3e;-webkit-text-stroke:0.12px #3e3e3e;right:181px;transform:matrix(0.8570,.0005,0,1,0.18,0.75);transform-origin:100% 0;">24,000.00</div>
<div class="t" style="top:282px;font-size:9.0px;line-height:12px;color:#3e3e3e;-webkit-text-stroke:0.12px #3e3e3e;right:125px;transform:matrix(0.8570,.0005,0,1,0.88,0.75);transform-origin:100% 0;">0.00</div>
<div class="t" style="top:282px;font-size:9.0px;line-height:12px;color:#3e3e3e;-webkit-text-stroke:0.12px #3e3e3e;right:68px;transform:matrix(0.8570,.0005,0,1,0.38,0.75);transform-origin:100% 0;">24,000.00</div>
<div class="t" style="top:305px;font-size:9.0px;line-height:12px;color:#3e3e3e;-webkit-text-stroke:0.12px #3e3e3e;left:211px;transform:matrix(0.8254,.0005,0,1,0.14,0);transform-origin:0 0;">1001</div>
<div class="t" style="top:305px;font-size:9.0px;line-height:12px;color:#3e3e3e;-webkit-text-stroke:0.12px #3e3e3e;left:259px;transform:matrix(0.8617,.0005,0,1,0.64,0);transform-origin:0 0;">100100101</div>
<div class="t" style="top:305px;font-size:9.0px;line-height:12px;color:#3e3e3e;-webkit-text-stroke:0.12px #3e3e3e;left:325px;transform:matrix(0.8179,.0005,0,1,0.89,0);transform-origin:0 0;">CASH ON HAND</div>
<div class="t" style="top:304px;font-size:9.0px;line-height:12px;color:#3e3e3e;-webkit-text-stroke:0.12px #3e3e3e;left:442px;transform:matrix(0.8442,.0005,0,1,0.05,0.25);transform-origin:0 0;">S:75 V:A004 AMATI INNOVATION ...</div>
<div class="t" style="top:305px;font-size:9.0px;line-height:12px;color:#3e3e3e;-webkit-text-stroke:0.12px #3e3e3e;left:582px;transform:matrix(0.7871,.0005,0,1,0.38,0);transform-origin:0 0;">THB</div>
<div class="t" style="top:305px;font-size:9.0px;line-height:12px;color:#3e3e3e;-webkit-text-stroke:0.12px #3e3e3e;right:295px;transform:matrix(0.8547,.0005,0,1,0.92,0);transform-origin:100% 0;">1.0000</div>
<div class="t" style="top:305px;font-size:9.0px;line-height:12px;color:#3e3e3e;-webkit-text-stroke:0.12px #3e3e3e;right:238px;transform:matrix(0.8570,.0005,0,1,0.58,0);transform-origin:100% 0;">1,000.00</div>
<div class="t" style="top:305px;font-size:9.0px;line-height:12px;color:#3e3e3e;-webkit-text-stroke:0.12px #3e3e3e;right:181px;transform:matrix(0.8570,.0005,0,1,0.18,0);transform-origin:100% 0;">0.00</div>
<div class="t" style="top:305px;font-size:9.0px;line-height:12px;color:#3e3e3e;-webkit-text-stroke:0.12px #3e3e3e;right:125px;transform:matrix(0.8570,.0005,0,1,0.88,0);transform-origin:100% 0;">1,000.00</div>
<div class="t" style="top:305px;font-size:9.0px;line-height:12px;color:#3e3e3e;-webkit-text-stroke:0.12px #3e3e3e;right:68px;transform:matrix(0.8570,.0005,0,1,0.38,0);transform-origin:100% 0;">0.00</div>
<div class="t" style="top:327px;font-size:9.0px;line-height:12px;color:#3e3e3e;-webkit-text-stroke:0.12px #3e3e3e;left:211px;transform:matrix(0.7450,.0005,0,1,0.42,0.25);transform-origin:0 0;">GEN</div>
<div class="t" style="top:327px;font-size:9.0px;line-height:12px;color:#3e3e3e;-webkit-text-stroke:0.12px #3e3e3e;left:259px;transform:matrix(0.8617,.0005,0,1,0.64,0.25);transform-origin:0 0;">100161014</div>
<div class="t" style="top:327px;font-size:9.0px;line-height:12px;color:#3e3e3e;-webkit-text-stroke:0.12px #3e3e3e;left:326px;transform:matrix(0.8068,.0005,0,1,0.13,0.25);transform-origin:0 0;">TV &amp; SOUND SYSTEM</div>
<div class="t" style="top:326px;font-size:9.0px;line-height:12px;color:#3e3e3e;-webkit-text-stroke:0.12px #3e3e3e;left:442px;transform:matrix(0.8442,.0005,0,1,0.05,0.25);transform-origin:0 0;">S:75 V:A004 AMATI INNOVATION ...</div>
<div class="t" style="top:327px;font-size:9.0px;line-height:12px;color:#3e3e3e;-webkit-text-stroke:0.12px #3e3e3e;left:582px;transform:matrix(0.7871,.0005,0,1,0.38,0.25);transform-origin:0 0;">THB</div>
<div class="t" style="top:327px;font-size:9.0px;line-height:12px;color:#3e3e3e;-webkit-text-stroke:0.12px #3e3e3e;right:295px;transform:matrix(0.8547,.0005,0,1,0.92,0.25);transform-origin:100% 0;">1.0000</div>
<div class="t" style="top:327px;font-size:9.0px;line-height:12px;color:#3e3e3e;-webkit-text-stroke:0.12px #3e3e3e;right:238px;transform:matrix(0.8570,.0005,0,1,0.58,0.25);transform-origin:100% 0;">22,429.91</div>
<div class="t" style="top:327px;font-size:9.0px;line-height:12px;color:#3e3e3e;-webkit-text-stroke:0.12px #3e3e3e;right:181px;transform:matrix(0.8570,.0005,0,1,0.18,0.25);transform-origin:100% 0;">0.00</div>
<div class="t" style="top:327px;font-size:9.0px;line-height:12px;color:#3e3e3e;-webkit-text-stroke:0.12px #3e3e3e;right:125px;transform:matrix(0.8570,.0005,0,1,0.88,0.25);transform-origin:100% 0;">22,429.91</div>
<div class="t" style="top:327px;font-size:9.0px;line-height:12px;color:#3e3e3e;-webkit-text-stroke:0.12px #3e3e3e;right:68px;transform:matrix(0.8570,.0005,0,1,0.38,0.25);transform-origin:100% 0;">0.00</div>
<div class="t" style="top:349px;font-size:9.0px;line-height:12px;color:#3e3e3e;-webkit-text-stroke:0.12px #3e3e3e;left:211px;transform:matrix(0.7561,.0005,0,1,0.19,0.25);transform-origin:0 0;">101</div>
<div class="t" style="top:349px;font-size:9.0px;line-height:12px;color:#3e3e3e;-webkit-text-stroke:0.12px #3e3e3e;left:259px;transform:matrix(0.8617,.0005,0,1,0.64,0.25);transform-origin:0 0;">1000000000</div>
<div class="t" style="top:349px;font-size:9.0px;line-height:12px;color:#3e3e3e;-webkit-text-stroke:0.12px #3e3e3e;left:326px;transform:matrix(0.8455,.0005,0,1,0.13,0.25);transform-origin:0 0;">Asset</div>
<div class="t" style="top:348px;font-size:9.0px;line-height:12px;color:#3e3e3e;-webkit-text-stroke:0.12px #3e3e3e;left:442px;transform:matrix(0.8442,.0005,0,1,0.05,0.5);transform-origin:0 0;">S:75 V:A004 AMATI INNOVATION ...</div>
<div class="t" style="top:349px;font-size:9.0px;line-height:12px;color:#3e3e3e;-webkit-text-stroke:0.12px #3e3e3e;left:582px;transform:matrix(0.7871,.0005,0,1,0.38,0.25);transform-origin:0 0;">THB</div>
<div class="t" style="top:349px;font-size:9.0px;line-height:12px;color:#3e3e3e;-webkit-text-stroke:0.12px #3e3e3e;right:295px;transform:matrix(0.8547,.0005,0,1,0.92,0.25);transform-origin:100% 0;">1.0000</div>
<div class="t" style="top:349px;font-size:9.0px;line-height:12px;color:#3e3e3e;-webkit-text-stroke:0.12px #3e3e3e;right:238px;transform:matrix(0.8570,.0005,0,1,0.58,0.25);transform-origin:100% 0;">70.00</div>
<div class="t" style="top:349px;font-size:9.0px;line-height:12px;color:#3e3e3e;-webkit-text-stroke:0.12px #3e3e3e;right:181px;transform:matrix(0.8570,.0005,0,1,0.18,0.25);transform-origin:100% 0;">0.00</div>
<div class="t" style="top:349px;font-size:9.0px;line-height:12px;color:#3e3e3e;-webkit-text-stroke:0.12px #3e3e3e;right:125px;transform:matrix(0.8570,.0005,0,1,0.88,0.25);transform-origin:100% 0;">70.00</div>
<div class="t" style="top:349px;font-size:9.0px;line-height:12px;color:#3e3e3e;-webkit-text-stroke:0.12px #3e3e3e;right:68px;transform:matrix(0.8570,.0005,0,1,0.38,0.25);transform-origin:100% 0;">0.00</div>
<div class="t" style="top:371px;font-size:9.0px;line-height:12px;color:#3e3e3e;-webkit-text-stroke:0.12px #3e3e3e;left:211px;transform:matrix(0.7450,.0005,0,1,0.42,0.5);transform-origin:0 0;">GEN</div>
<div class="t" style="top:371px;font-size:9.0px;line-height:12px;color:#3e3e3e;-webkit-text-stroke:0.12px #3e3e3e;left:259px;transform:matrix(0.8617,.0005,0,1,0.64,0.5);transform-origin:0 0;">1613002</div>
<div class="t" style="top:371px;font-size:9.0px;line-height:12px;color:#3e3e3e;-webkit-text-stroke:0.12px #3e3e3e;left:325px;transform:matrix(0.8191,.0005,0,1,0.67,0.5);transform-origin:0 0;">INPUT TAX UNDUE</div>
<div class="t" style="top:370px;font-size:9.0px;line-height:12px;color:#3e3e3e;-webkit-text-stroke:0.12px #3e3e3e;left:442px;transform:matrix(0.8442,.0005,0,1,0.05,0.5);transform-origin:0 0;">S:75 V:A004 AMATI INNOVATION ...</div>
<div class="t" style="top:371px;font-size:9.0px;line-height:12px;color:#3e3e3e;-webkit-text-stroke:0.12px #3e3e3e;left:582px;transform:matrix(0.7871,.0005,0,1,0.38,0.5);transform-origin:0 0;">THB</div>
<div class="t" style="top:371px;font-size:9.0px;line-height:12px;color:#3e3e3e;-webkit-text-stroke:0.12px #3e3e3e;right:295px;transform:matrix(0.8547,.0005,0,1,0.92,0.5);transform-origin:100% 0;">1.0000</div>
<div class="t" style="top:371px;font-size:9.0px;line-height:12px;color:#3e3e3e;-webkit-text-stroke:0.12px #3e3e3e;right:238px;transform:matrix(0.8570,.0005,0,1,0.58,0.5);transform-origin:100% 0;">1,570.09</div>
<div class="t" style="top:371px;font-size:9.0px;line-height:12px;color:#3e3e3e;-webkit-text-stroke:0.12px #3e3e3e;right:181px;transform:matrix(0.8570,.0005,0,1,0.18,0.5);transform-origin:100% 0;">0.00</div>
<div class="t" style="top:371px;font-size:9.0px;line-height:12px;color:#3e3e3e;-webkit-text-stroke:0.12px #3e3e3e;right:125px;transform:matrix(0.8570,.0005,0,1,0.88,0.5);transform-origin:100% 0;">1,570.09</div>
<div class="t" style="top:371px;font-size:9.0px;line-height:12px;color:#3e3e3e;-webkit-text-stroke:0.12px #3e3e3e;right:68px;transform:matrix(0.8570,.0005,0,1,0.38,0.5);transform-origin:100% 0;">0.00</div>
<div class="t" style="top:392px;font-size:8.4px;line-height:12px;color:#2f4a86;font-weight:bold;left:683px;transform:matrix(1.0864,.0005,0,1,0.53,0.25);transform-origin:0 0;">49,070.00</div>
<div class="t" style="top:392px;font-size:8.4px;line-height:12px;color:#2f4a86;font-weight:bold;left:740px;transform:matrix(1.0864,.0005,0,1,0.53,0.25);transform-origin:0 0;">49,070.00</div>
<div class="t" style="top:392px;font-size:8.4px;line-height:12px;color:#2f4a86;font-weight:bold;left:796px;transform:matrix(1.0870,.0005,0,1,1.00,0.25);transform-origin:0 0;">49,070.00</div>
<div class="t" style="top:392px;font-size:8.4px;line-height:12px;color:#2f4a86;font-weight:bold;left:853px;transform:matrix(1.0842,.0005,0,1,0.77,0.25);transform-origin:0 0;">49,070.00</div>
</div>
</body>
</html>
